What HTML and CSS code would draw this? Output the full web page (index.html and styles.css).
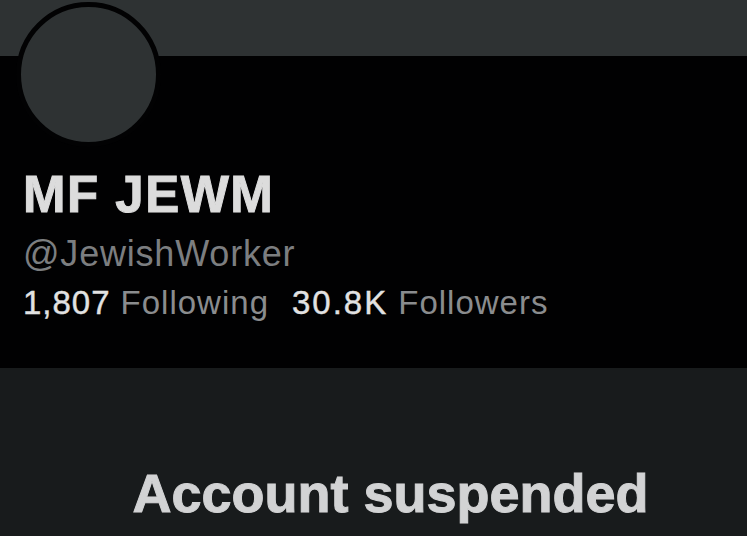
FILE: index.html
```html
<!DOCTYPE html>
<html>
<head>
<meta charset="utf-8">
<link rel="stylesheet" href="styles.css">
</head>
<body>
<div class="page">
  <div class="banner"></div>
  <div class="profile">
    <div class="avatar"></div>
    <div class="name">MF JEWM</div>
    <div class="handle">@JewishWorker</div>
    <div class="stats">
      <div class="stat"><span class="num">1,807</span><span class="label">Following</span></div>
      <div class="stat"><span class="num">30.8K</span><span class="label">Followers</span></div>
    </div>
  </div>
  <div class="body">
    <div class="suspended">Account suspended</div>
  </div>
</div>
</body>
</html>
```
FILE: styles.css
```css
html, body {
  margin: 0;
  padding: 0;
  background: #181b1c;
}
.page {
  width: 747px;
  height: 536px;
  overflow: hidden;
  display: flex;
  flex-direction: column;
  font-family: "Liberation Sans", Arial, sans-serif;
}
.banner {
  height: 56px;
  background: #2e3233;
  flex: none;
}
.profile {
  position: relative;
  background: #010102;
  height: 312px;
  flex: none;
  padding: 110px 0 0 23px;
  box-sizing: border-box;
}
.avatar {
  position: absolute;
  left: 16px;
  top: -54px;
  width: 135px;
  height: 135px;
  border-radius: 50%;
  background: #2e3233;
  border: 5px solid #020203;
}
.name {
  font-size: 51px;
  font-weight: bold;
  color: #dcdcdc;
  letter-spacing: 1.5px;
  line-height: 58px;
  -webkit-text-stroke: 1px #dcdcdc;
}
.handle {
  font-size: 36px;
  color: #7c7e80;
  line-height: 40px;
  margin-top: 10px;
  letter-spacing: 0.8px;
}
.stats {
  display: flex;
  gap: 23px;
  font-size: 33px;
  line-height: 40px;
  margin-top: 9px;
}
.stat {
  display: flex;
  gap: 10px;
}
.num {
  color: #e2e2e2;
  letter-spacing: 1px;
  -webkit-text-stroke: 0.4px #e2e2e2;
}
.stat + .stat .num {
  letter-spacing: 2px;
}
.label {
  color: #8a8c8e;
  letter-spacing: 1px;
}
.body {
  flex: 1;
  background: #181b1c;
  display: flex;
  justify-content: center;
  padding-top: 95px;
  padding-left: 34px;
}
.suspended {
  font-size: 54px;
  font-weight: bold;
  color: #d2d3d4;
  line-height: 60px;
  -webkit-text-stroke: 1px #d2d3d4;
}
```
